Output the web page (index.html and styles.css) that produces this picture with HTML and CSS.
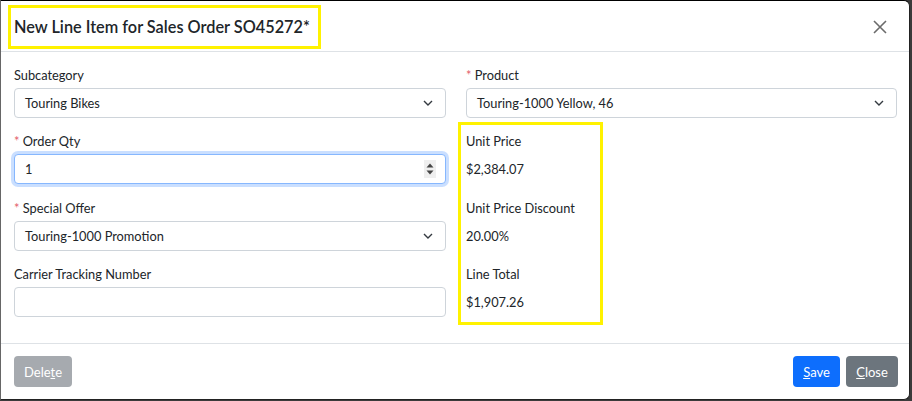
FILE: index.html
```html
<!DOCTYPE html>
<html>
<head>
<meta charset="utf-8">
<link rel="stylesheet" href="styles.css">
</head>
<body>
<div class="modal">
  <div class="modal-header">
    <h5 class="modal-title">New Line Item for Sales Order SO45272*</h5>
    <button class="btn-close" aria-label="Close">
      <svg width="14" height="14" viewBox="0 0 14 14"><path d="M1 1L13 13M13 1L1 13" stroke="#6b6b6b" stroke-width="1.6" fill="none"/></svg>
    </button>
    <div class="hl hl-title"></div>
  </div>
  <div class="modal-body">
    <div class="col">
      <div class="field">
        <label class="lbl">Subcategory</label>
        <div class="select">Touring Bikes<svg class="chev" width="10" height="6" viewBox="0 0 10 6"><path d="M1 1L5 5L9 1" stroke="#343a40" stroke-width="1.4" fill="none"/></svg></div>
      </div>
      <div class="field">
        <label class="lbl"><span class="req">*</span> Order Qty</label>
        <div class="input focus">1
          <div class="spin">
            <svg width="10" height="18" viewBox="0 0 10 18"><path d="M1.5 7.5L5 3.5L8.5 7.5Z" fill="#444"/><path d="M1.5 10.5L5 14.5L8.5 10.5Z" fill="#444"/></svg>
          </div>
        </div>
      </div>
      <div class="field">
        <label class="lbl"><span class="req">*</span> Special Offer</label>
        <div class="select">Touring-1000 Promotion<svg class="chev" width="10" height="6" viewBox="0 0 10 6"><path d="M1 1L5 5L9 1" stroke="#343a40" stroke-width="1.4" fill="none"/></svg></div>
      </div>
      <div class="field">
        <label class="lbl">Carrier Tracking Number</label>
        <div class="input"></div>
      </div>
    </div>
    <div class="col right">
      <div class="field">
        <label class="lbl"><span class="req">*</span> Product</label>
        <div class="select">Touring-1000 Yellow, 46<svg class="chev" width="10" height="6" viewBox="0 0 10 6"><path d="M1 1L5 5L9 1" stroke="#343a40" stroke-width="1.4" fill="none"/></svg></div>
      </div>
      <div class="field">
        <label class="lbl">Unit Price</label>
        <div class="value">$2,384.07</div>
      </div>
      <div class="field">
        <label class="lbl">Unit Price Discount</label>
        <div class="value">20.00%</div>
      </div>
      <div class="field">
        <label class="lbl">Line Total</label>
        <div class="value">$1,907.26</div>
      </div>
      <div class="hl hl-info"></div>
    </div>
  </div>
  <div class="modal-footer">
    <button class="btn btn-delete">Dele<u>t</u>e</button>
    <div class="spacer"></div>
    <button class="btn btn-save"><u>S</u>ave</button>
    <button class="btn btn-close-f"><u>C</u>lose</button>
  </div>
</div>
</body>
</html>
```
FILE: styles.css
```css
* { box-sizing: border-box; }
html, body { margin: 0; padding: 0; }
body {
  background: #3b3b3b;
  font-family: Lato, "Noto Sans", sans-serif;
  font-size: 12.8px;
  color: #212529;
  width: 912px;
  height: 401px;
  overflow: hidden;
}
.modal {
  width: 910px;
  height: 400px;
  background: #fff;
  border: 1px solid #222;
  border-top-color: #000;
  border-left-color: #666;
  border-radius: 0 6px 6px 0;
  display: flex;
  flex-direction: column;
}
.modal-header {
  position: relative;
  height: 51px;
  border-bottom: 1px solid #dee2e6;
  display: flex;
  align-items: center;
  padding: 0 12px 0 13px;
}
.modal-title {
  margin: 0;
  font-size: 16.3px;
  font-weight: 600;
  color: #212529;
  flex: 1;
}
.btn-close {
  border: 0;
  background: transparent;
  padding: 0;
  width: 14px;
  height: 14px;
  margin-right: 10px;
  margin-top: 1px;
  display: flex;
}
.hl {
  position: absolute;
  border: 3px solid #fff200;
  pointer-events: none;
}
.hl-title { left: 7px; top: 4px; width: 313px; height: 44px; }
.modal-body {
  flex: 1;
  display: grid;
  grid-template-columns: 432px 431px;
  column-gap: 20px;
  padding: 13px 12px 0 13px;
}
.col { display: flex; flex-direction: column; }
.col.right { position: relative; }
.hl-info { left: -8px; top: 57px; width: 145px; height: 203px; }
.field { margin-bottom: 13.4px; }
.lbl {
  display: block;
  height: 20px;
  line-height: 20px;
  margin-bottom: 3px;
}
.req { color: #e35d6a; }
.select, .input {
  position: relative;
  height: 30px;
  border: 1px solid #ced4da;
  border-radius: 4px;
  line-height: 28px;
  padding: 0 10px;
  background: #fff;
}
.chev { position: absolute; right: 12px; top: 11px; }
.input.focus {
  border-color: #86b7fe;
  box-shadow: 0 0 0 3px rgba(13, 110, 253, 0.22);
}
.spin {
  position: absolute;
  right: 9px;
  top: 5px;
  width: 12px;
  height: 18px;
  background: #efefef;
  display: flex;
  align-items: center;
  justify-content: center;
}
.value {
  height: 30px;
  line-height: 30px;
}
.modal-footer {
  height: 56px;
  border-top: 1px solid #dee2e6;
  display: flex;
  align-items: flex-start;
  padding: 12px 11px 0 13px;
  gap: 6px;
}
.spacer { flex: 1; }
.btn {
  height: 31px;
  border: 0;
  border-radius: 4px;
  color: #fff;
  font-family: Lato, "Noto Sans", sans-serif;
  font-size: 13px;
  padding: 0 6px;
}
.btn-delete { background: #a6aaaf; width: 58px; }
.btn-save { background: #0d6efd; width: 47px; }
.btn-close-f { background: #6c757d; width: 52px; }
```
